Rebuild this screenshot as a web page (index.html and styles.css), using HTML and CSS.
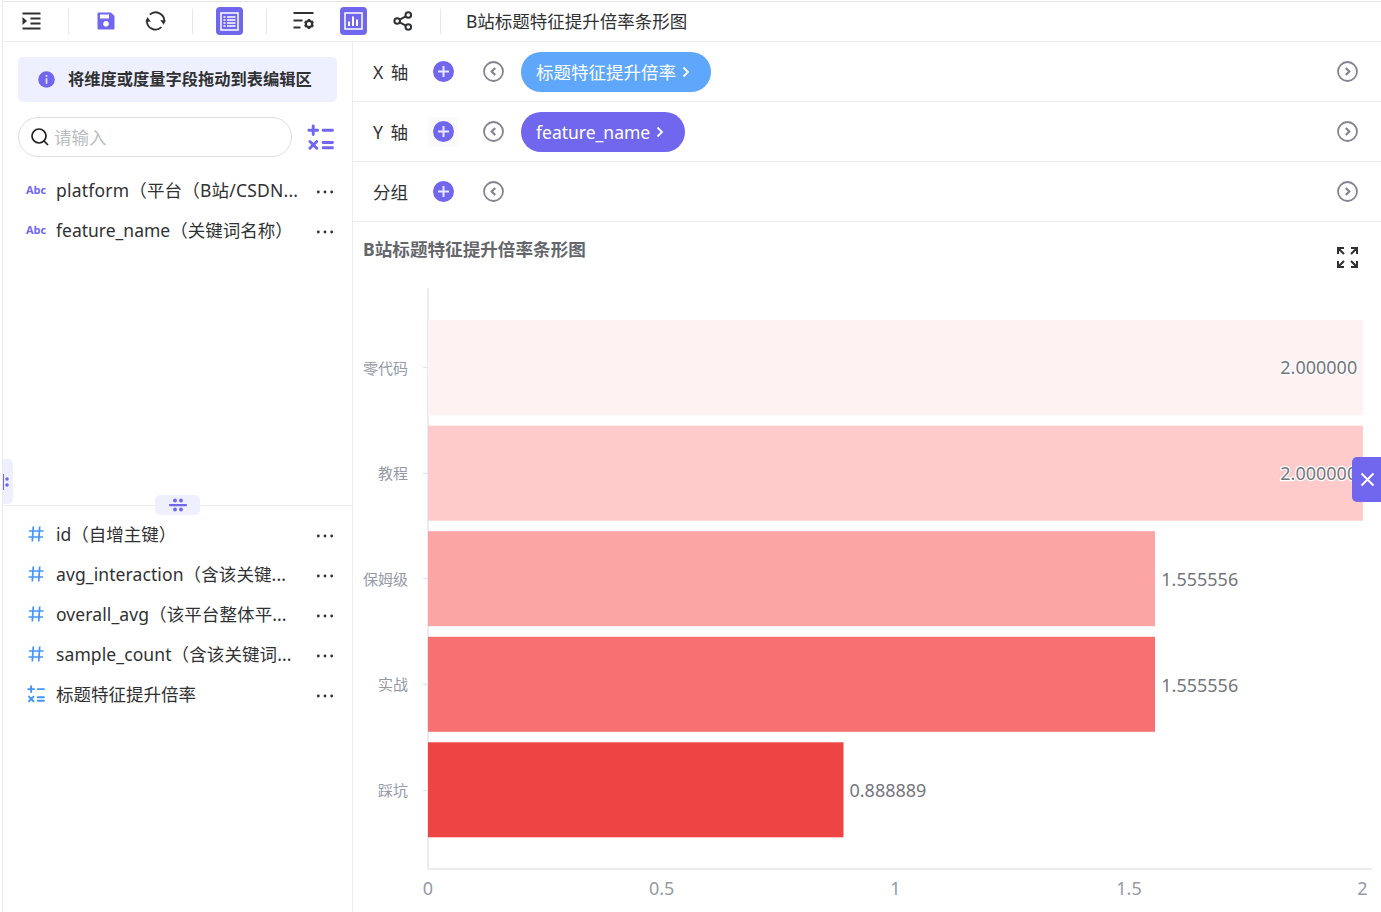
FILE: index.html
```html
<!DOCTYPE html>
<html lang="zh-CN">
<head>
    <meta charset="UTF-8">
    <meta name="viewport" content="width=device-width, initial-scale=1.0">
    <title>B站标题特征提升倍率条形图</title>
    <link rel="stylesheet" href="styles.css">
</head>
<body>
    <!-- shared icons -->
    <svg class="sprite" aria-hidden="true">
        <symbol id="plus" viewBox="0 0 21 21">
            <circle cx="10.5" cy="10.5" r="10.5" fill="#7067ee"/>
            <path d="M10.5 5v11M5 10.5h11" stroke="#e8e8ff" stroke-width="2"/>
        </symbol>
        <symbol id="prev" viewBox="0 0 21 21" fill="none" stroke="#858391">
            <circle cx="10.5" cy="10.5" r="9.5" stroke-width="1.8"/>
            <path d="M12.2 7L8.7 10.5l3.500 3.500" stroke-width="2.200"/>
        </symbol>
        <symbol id="next" viewBox="0 0 21 21" fill="none" stroke="#858391">
            <circle cx="10.5" cy="10.5" r="9.5" stroke-width="1.8"/>
            <path d="M8.800 7l3.500 3.500-3.500 3.500" stroke-width="2.200"/>
        </symbol>
        <symbol id="more" viewBox="0 0 18 4">
            <circle cx="2.3" cy="2" r="1.4"/><circle cx="9" cy="2" r="1.4"/><circle cx="15.7" cy="2" r="1.4"/>
        </symbol>
        <symbol id="hash" viewBox="0 0 16 16">
            <path d="M5.3.5L4.300 15.5M11.700.5l-1 15M1 5h14.500M.5 11H15" fill="none" stroke="#4495f7" stroke-width="1.700"/>
        </symbol>
        <symbol id="calc" viewBox="0 0 26 26">
            <path d="M6 1.800v8.400M1.800 6h8.400M15.500 6h9M2.800 16.800l6.600 6.600M9.400 16.800l-6.600 6.600M15.500 17.800h9M15.500 22.800h9" fill="none" stroke="currentColor" stroke-width="2.800" stroke-linecap="round"/>
        </symbol>
    </svg>

    <div class="app">
        <header class="toolbar">
            <span class="tool">
                <svg width="19" height="18" viewBox="0 0 19 18"><path d="M.5 1.500h18M8.500 6.500h10M8.500 11.500h10M.5 16.500h18" stroke="#303133" stroke-width="1.800"/><path d="M.5 5l4.500 4-4.500 4z" fill="#303133"/></svg>
            </span>
            <span class="sep"></span>
            <span class="tool">
                <svg width="18" height="18" viewBox="0 0 18 18"><path fill="#7067ee" fill-rule="evenodd" d="M1.500.5H14L17.500 4v12.300q0 1.200-1.200 1.200H1.700Q.5 17.500.5 16.300V1.500Q.5.5 1.500.5zM3 2.500v4h9v-4zM9 9a2.900 2.900 0 1 0 .01 0z"/></svg>
            </span>
            <span class="tool gap">
                <svg width="21" height="20" viewBox="0 0 21 20" fill="none" stroke="#303133" stroke-width="1.800"><path d="M4.800 3.700A8.600 8.600 0 0 1 19.200 11M16.400 16.200A8.600 8.600 0 0 1 2 9"/><path d="M15.300 9l3.300 4.800 2.200-4.300zM5.800 10.800L2.500 6 .3 10.500z" fill="#303133" stroke="none"/></svg>
            </span>
            <span class="sep"></span>
            <span class="tool active">
                <svg width="19" height="19" viewBox="0 0 19 19" fill="none" stroke="#fff"><rect x="1" y="1" width="17" height="17" stroke-width="1.500"/><path d="M3.500 5h2M3.500 8h2M3.500 11h2M3.500 14h2M7 5h8.500M7 8h8.500M7 11h8.500M7 14h8.500" stroke-width="1.500"/></svg>
            </span>
            <span class="sep"></span>
            <span class="tool">
                <svg width="22" height="18" viewBox="0 0 22 18" fill="none" stroke="#303133" stroke-width="1.800"><path d="M.5 1h20M.5 8.500h9M.5 15.500h7"/><circle cx="16" cy="12" r="3.200" stroke-width="2.300"/><path d="M16 8.500v-1.500M16 17v-1.500M13 10.300l-1.300-.8M20.300 14.500l-1.300-.8M13 13.700l-1.300.8M20.300 9.500l-1.300.8" stroke-width="2.400"/></svg>
            </span>
            <span class="tool active gap">
                <svg width="19" height="18" viewBox="0 0 19 18" fill="none" stroke="#fff"><rect x="1" y="1" width="17" height="16" stroke-width="1.500"/><path d="M5 14V9.500M9 14V4.500M13 14V7.500" stroke-width="2"/></svg>
            </span>
            <span class="tool gap">
                <svg class="share" width="20" height="20" viewBox="0 0 20 20" fill="none" stroke="#303133" stroke-width="2"><circle cx="4.200" cy="10" r="2.800"/><circle cx="15.300" cy="4" r="2.800"/><circle cx="15.300" cy="16" r="2.800"/><path d="M6.700 8.700l6.100-3.300M6.700 11.300l6.100 3.300"/></svg>
            </span>
            <span class="sep"></span>
            <h1 class="title">B站标题特征提升倍率条形图</h1>
        </header>

        <div class="main">
            <aside class="sidebar">
                <section class="dimensions">
                    <div class="tip">
                        <svg width="17" height="17" viewBox="0 0 17 17"><circle cx="8.500" cy="8.500" r="8.300" fill="#7067ee"/><path d="M8.500 4v1.800M8.500 7.200v5.600" stroke="#e2e3ff" stroke-width="1.700"/></svg>
                        <span>将维度或度量字段拖动到表编辑区</span>
                    </div>
                    <div class="search-row">
                        <div class="search">
                            <svg width="18" height="18" viewBox="0 0 18 18" fill="none" stroke="#222" stroke-width="1.700"><circle cx="8" cy="8" r="7"/><path d="M13 13l4 4"/></svg>
                            <span>请输入</span>
                        </div>
                        <svg class="calc-btn"><use href="#calc"/></svg>
                    </div>
                    <ul class="fields">
                        <li><b class="abc">Abc</b><span class="wide">platform（平台（B站/CSDN...</span><svg class="more"><use href="#more"/></svg></li>
                        <li><b class="abc">Abc</b><span>feature_name（关键词名称）</span><svg class="more"><use href="#more"/></svg></li>
                    </ul>
                    <div class="side-handle">
                        <svg width="10" height="18" viewBox="0 0 10 18" fill="#7067ee"><path d="M0 1h1v16H0z"/><circle cx="4" cy="6" r="1.800"/><circle cx="4" cy="12" r="1.800"/></svg>
                    </div>
                    <div class="drag-handle">
                        <svg width="18" height="14" viewBox="0 0 18 14" fill="#7067ee"><rect y="6" width="18" height="2.200" rx="1"/><circle cx="6" cy="2.500" r="1.900"/><circle cx="12" cy="2.500" r="1.900"/><circle cx="6" cy="11.500" r="1.900"/><circle cx="12" cy="11.500" r="1.900"/></svg>
                    </div>
                </section>
                <ul class="fields measures">
                    <li><svg class="hash"><use href="#hash"/></svg><span>id（自增主键）</span><svg class="more"><use href="#more"/></svg></li>
                    <li><svg class="hash"><use href="#hash"/></svg><span class="loose">avg_interaction（含该关键...</span><svg class="more"><use href="#more"/></svg></li>
                    <li><svg class="hash"><use href="#hash"/></svg><span class="loose">overall_avg（该平台整体平...</span><svg class="more"><use href="#more"/></svg></li>
                    <li><svg class="hash"><use href="#hash"/></svg><span class="loose">sample_count（含该关键词...</span><svg class="more"><use href="#more"/></svg></li>
                    <li><svg class="hash calc"><use href="#calc"/></svg><span>标题特征提升倍率</span><svg class="more"><use href="#more"/></svg></li>
                </ul>
            </aside>

            <main class="content">
                <div class="axis-row">
                    <span class="axis-name">X 轴</span>
                    <span class="add"><svg><use href="#plus"/></svg></span>
                    <svg class="arrow"><use href="#prev"/></svg>
                    <span class="pill blue">标题特征提升倍率<svg width="8" height="12" viewBox="0 0 8 12"><path d="M1.500 1.500L6 6l-4.500 4.500"/></svg></span>
                    <svg class="arrow last"><use href="#next"/></svg>
                </div>
                <div class="axis-row">
                    <span class="axis-name">Y 轴</span>
                    <span class="add hover"><svg><use href="#plus"/></svg></span>
                    <svg class="arrow"><use href="#prev"/></svg>
                    <span class="pill purple">feature_name<svg width="8" height="12" viewBox="0 0 8 12"><path d="M1.500 1.500L6 6l-4.500 4.500"/></svg></span>
                    <svg class="arrow last"><use href="#next"/></svg>
                </div>
                <div class="axis-row">
                    <span class="axis-name">分组</span>
                    <span class="add"><svg><use href="#plus"/></svg></span>
                    <svg class="arrow"><use href="#prev"/></svg>
                    <svg class="arrow last"><use href="#next"/></svg>
                </div>

                <div class="chart-panel">
                    <div class="chart-head">
                        <h2>B站标题特征提升倍率条形图</h2>
                        <svg class="expand" width="21" height="21" viewBox="0 0 21 21" fill="none" stroke="#303133" stroke-width="2"><path d="M1 7V1h6M1.500 1.500l5.500 5.500M14 1h6v6M19.500 1.500L14 7M1 14v6h6M1.500 19.500L7 14M20 14v6h-6M19.500 19.500L14 14"/></svg>
                    </div>
                    <svg class="chart" width="1028" height="632" viewBox="0 0 1028 632">
                        <path class="axis" d="M75 8.500V588.500M75 589H1019M70 87.500h5M70 193.500h5M70 298.500h5M70 404.500h5M70 510.500h5"/>
                        <rect x="75" y="40.200" width="935" height="95" fill="#fef2f2"/>
                        <rect x="75" y="145.700" width="935" height="95" fill="#fecaca"/>
                        <rect x="75" y="251.200" width="727" height="95" fill="#fca5a5"/>
                        <rect x="75" y="356.800" width="727" height="95" fill="#f87171"/>
                        <rect x="75" y="462.300" width="415.500" height="95" fill="#ef4444"/>
                        <g class="category">
                            <text x="55" y="93.500">零代码</text>
                            <text x="55" y="199">教程</text>
                            <text x="55" y="304.500">保姆级</text>
                            <text x="55" y="410">实战</text>
                            <text x="55" y="515.500">踩坑</text>
                        </g>
                        <g class="value">
                            <text x="927.300" y="94">2.000000</text>
                            <text x="927.300" y="200">2.000000</text>
                            <text x="808.300" y="305.500">1.555556</text>
                            <text x="808.300" y="411.500">1.555556</text>
                            <text x="496.500" y="516.500">0.888889</text>
                        </g>
                        <g class="tick">
                            <text x="75" y="615">0</text>
                            <text x="308.700" y="615">0.5</text>
                            <text x="542.500" y="615">1</text>
                            <text x="776" y="615">1.5</text>
                            <text x="1009.500" y="615">2</text>
                        </g>
                    </svg>
                </div>
            </main>
        </div>
        <button class="close-tab">
            <svg width="15" height="15" viewBox="0 0 15 15"><path d="M1.500 1.500l12 12M13.500 1.500l-12 12" stroke="#fff" stroke-width="1.900"/></svg>
        </button>
    </div>
</body>
</html>
```
FILE: styles.css
```css
* {
    box-sizing: border-box;
}
body {
    margin: 0;
    font-family: "Noto Sans", "Noto Sans CJK SC", sans-serif;
    font-size: 17.5px;
    color: #303133;
    background: #fff;
    text-spacing-trim: space-all;
    overflow: hidden;
}
svg {
    display: block;
    flex: none;
}
.sprite {
    position: absolute;
    width: 0;
    height: 0;
}
.app {
    position: relative;
    display: flex;
    flex-direction: column;
    height: 912px;
    margin-left: 2px;
    padding-top: 1px;
    border-left: 1px solid #ebebeb;
}

/* toolbar */
.toolbar {
    display: flex;
    align-items: center;
    height: 41px;
    flex: none;
    padding: 0 0 1px 15px;
    border-top: 1px solid #e4e4e4;
    border-bottom: 1px solid #ededf0;
}
.tool {
    display: flex;
    align-items: center;
    justify-content: center;
    width: 27px;
    height: 28px;
    border-radius: 4px;
}
.tool.active {
    background: #7067ee;
}
.tool.gap {
    margin-left: 23px;
}
.sep {
    width: 1px;
    height: 25px;
    margin: 0 23px;
    background: #e6e6ec;
}
.share {
    margin-right: 2px;
}
.title {
    margin: 0 0 0 2px;
    font-size: 17.5px;
    font-weight: 400;
    line-height: 28px;
}

.main {
    display: flex;
    flex: 1;
    min-height: 0;
}

/* sidebar */
.sidebar {
    width: 350px;
    flex: none;
    border-right: 1px solid #ededf0;
}
.dimensions {
    position: relative;
    height: 464px;
    padding-top: 15px;
    border-bottom: 1px solid #ededf0;
}
.tip {
    display: flex;
    align-items: center;
    height: 45px;
    margin: 0 15px;
    padding-left: 20px;
    gap: 13px;
    border-radius: 5px;
    background: #eef0ff;
    font-size: 16.25px;
    font-weight: 700;
}
.tip span {
    padding-bottom: 3px;
}
.search-row {
    display: flex;
    align-items: center;
    margin: 15px 18px 14px 15px;
}
.search {
    display: flex;
    align-items: center;
    width: 274px;
    height: 40px;
    padding-left: 12px;
    gap: 5px;
    border: 1px solid #dddee2;
    border-radius: 20px;
    color: #bcbdc2;
}
.search span {
    padding-bottom: 2px;
}
.calc-btn {
    width: 27px;
    height: 27px;
    margin-left: 15px;
    color: #7067ee;
}
.fields {
    list-style: none;
    margin: 0;
    padding: 0 18px 0 23px;
}
.fields li {
    display: flex;
    align-items: center;
    height: 40px;
    white-space: nowrap;
}
.fields span {
    padding-bottom: 4px;
}
.fields .wide {
    letter-spacing: 0.2px;
}
.fields .loose {
    letter-spacing: 0.1px;
}
.abc {
    width: 30px;
    padding-bottom: 4px;
    font-family: "Open Sans", sans-serif;
    font-size: 11px;
    color: #7067ee;
}
.hash {
    width: 16px;
    height: 16px;
    margin: 0 12px 2px 2px;
}
.hash.calc {
    width: 18px;
    height: 18px;
    margin: 0 11px 3px 1px;
    color: #4495f7;
}
.more {
    width: 18px;
    height: 4px;
    margin-left: auto;
    margin-top: 2px;
    fill: #303133;
}
.measures {
    padding-top: 9px;
}
.side-handle {
    position: absolute;
    left: 0;
    top: 417px;
    display: flex;
    align-items: center;
    width: 10px;
    height: 45px;
    border-radius: 0 5px 5px 0;
    background: #eef0ff;
}
.drag-handle {
    position: absolute;
    left: 152px;
    bottom: -10px;
    display: flex;
    align-items: center;
    justify-content: center;
    width: 45px;
    height: 20px;
    border-radius: 5px;
    background: #eef0ff;
}

/* axis settings */
.content {
    flex: 1;
    min-width: 0;
}
.axis-row {
    display: flex;
    align-items: center;
    height: 60px;
    padding: 0 23px 0 20px;
    border-bottom: 1px solid #ededf0;
}
.axis-name {
    width: 55px;
    word-spacing: 3px;
}
.add {
    display: flex;
    align-items: center;
    justify-content: center;
    width: 30px;
    height: 30px;
    margin-right: 25px;
    border-radius: 3px;
}
.add.hover {
    background: #fafafb;
}
.add svg,
.arrow {
    width: 21px;
    height: 21px;
}
.arrow.last {
    margin-left: auto;
}
.pill {
    display: flex;
    align-items: center;
    height: 40px;
    margin-left: 17px;
    padding: 0 21px 0 15px;
    gap: 6px;
    border-radius: 20px;
    color: #fff;
}
.pill svg {
    fill: none;
    stroke: #fff;
    stroke-width: 1.8;
}
.pill.blue {
    width: 190px;
    background: #5ea7fb;
}
.pill.purple {
    width: 164px;
    background: #7067ee;
}

/* chart */
.chart-head {
    display: flex;
    justify-content: space-between;
    height: 58px;
    padding: 13px 23px 0 10px;
}
.chart-head h2 {
    margin: 0;
    font-size: 17.6px;
    line-height: 28px;
    color: #65666c;
}
.expand {
    margin-top: 12px;
}
.axis {
    fill: none;
    stroke: #e4e5ec;
    stroke-width: 1.5;
}
.category {
    font-size: 15px;
    fill: #949aa8;
    text-anchor: end;
}
.value {
    font-size: 18px;
    fill: #74767d;
    stroke: #fff;
    stroke-width: 2.5px;
    stroke-linejoin: round;
    paint-order: stroke;
}
.tick {
    font-size: 18px;
    fill: #949aa8;
    text-anchor: middle;
}

.close-tab {
    position: absolute;
    right: 0;
    top: 457px;
    display: flex;
    align-items: center;
    justify-content: center;
    width: 29px;
    height: 45px;
    padding: 0 0 1px 1px;
    border: 0;
    border-radius: 5px 0 0 5px;
    background: #7067ee;
}
```
